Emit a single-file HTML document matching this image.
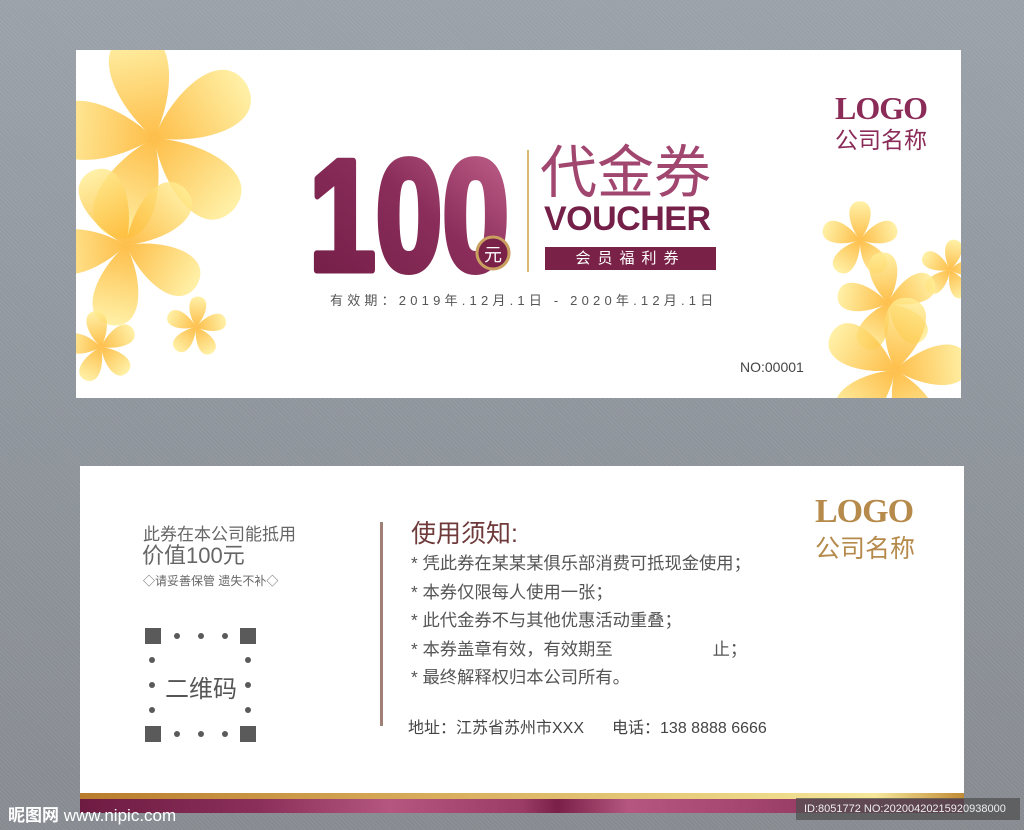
<!DOCTYPE html>
<html><head><meta charset="utf-8"><style>
*{margin:0;padding:0;box-sizing:border-box}
body{width:1024px;height:830px;position:relative;overflow:hidden;font-family:"Liberation Sans","Noto Sans CJK SC",sans-serif;
background:linear-gradient(180deg,#9aa1a9 0%,#8f959c 50%,#878b91 100%)}
.tex{position:absolute;inset:0;background:repeating-linear-gradient(45deg,rgba(255,255,255,.06) 0 1px,transparent 1px 3px)}
.card{position:absolute;background:#fff}
.abs{position:absolute;white-space:nowrap}
</style></head><body>
<div class="tex"></div>
<svg width="0" height="0" style="position:absolute">
<defs>
<linearGradient id="pg2" x1="0" y1="1" x2="0" y2="0">
<stop offset="0" stop-color="#fdb022"/><stop offset="1" stop-color="#ffee95"/></linearGradient>
<path id="pt" d="M0,0 C-30,-38 -44,-100 0,-102 C44,-100 30,-38 0,0Z" fill="url(#pg2)" opacity=".82"/>
<g id="fl"><use href="#pt"/><use href="#pt" transform="rotate(72)"/><use href="#pt" transform="rotate(144)"/><use href="#pt" transform="rotate(216)"/><use href="#pt" transform="rotate(288)"/></g>
<linearGradient id="num" x1="0" y1="1" x2="1" y2="0"><stop offset="0" stop-color="#701c45"/><stop offset=".55" stop-color="#8a2d5a"/><stop offset=".85" stop-color="#b4557f"/><stop offset="1" stop-color="#8a2d5a"/></linearGradient>
</defs></svg>

<div class="card" style="left:76px;top:50px;width:885px;height:348px;overflow:hidden">
<svg width="885" height="348" style="position:absolute;left:0;top:0">
<use href="#fl" transform="translate(78,88) rotate(-12) scale(1.05)"/>
<use href="#fl" transform="translate(50,195) rotate(-25) scale(.8)"/>
<use href="#fl" transform="translate(120,277) rotate(5) scale(.3)"/>
<use href="#fl" transform="translate(25,297) rotate(-10) scale(.36)"/>
<use href="#fl" transform="translate(784,190) rotate(0) scale(.38)"/>
<use href="#fl" transform="translate(874,220) rotate(10) scale(.3)"/>
<use href="#fl" transform="translate(812,253) rotate(-8) scale(.5)"/>
<use href="#fl" transform="translate(819,320) rotate(12) scale(.72)"/>
<text x="233" y="220" font-family="Liberation Sans" font-weight="bold" font-size="158" fill="url(#num)" stroke="url(#num)" stroke-width="7" stroke-linejoin="round" textLength="200" lengthAdjust="spacingAndGlyphs">100</text>
<circle cx="417" cy="203" r="16" fill="#7a2148" stroke="#c9a060" stroke-width="3"/>
<text x="417" y="211" text-anchor="middle" font-family="Noto Sans CJK SC" font-size="18" fill="#fff">元</text>
<line x1="452" y1="100" x2="452" y2="222" stroke="#d9b870" stroke-width="2"/>
</svg>
<div class="abs" style="left:464px;top:93px;font-size:57px;line-height:60px;color:#a0466f">代金券</div>
<div class="abs" style="left:468px;top:150px;font-size:34px;font-weight:bold;color:#752048;letter-spacing:-0.5px">VOUCHER</div>
<div class="abs" style="left:469px;top:197px;width:171px;height:23px;background:#7a2148;color:#fff;font-size:15px;line-height:23px;text-align:center;letter-spacing:7px">会员福利券</div>
<div class="abs" style="left:254px;top:240px;font-size:13px;color:#555;letter-spacing:4.2px">有效期：2019年.12月.1日 - 2020年.12月.1日</div>
<div class="abs" style="left:759px;top:40px;font-family:'Liberation Serif',serif;font-weight:bold;font-size:32px;color:#8a2b58;letter-spacing:-1px">LOGO</div>
<div class="abs" style="left:759px;top:71px;font-size:23px;color:#8a2b58">公司名称</div>
<div class="abs" style="left:664px;top:309px;font-size:14px;color:#444">NO:00001</div>
</div>

<div class="card" style="left:80px;top:466px;width:884px;height:347px">
<div class="abs" style="left:63px;top:54px;font-size:17px;color:#666">此券在本公司能抵用</div>
<div class="abs" style="left:62px;top:72px;font-size:22px;color:#666">价值100元</div>
<div class="abs" style="left:63px;top:106px;font-size:12px;color:#666">◇请妥善保管 遗失不补◇</div>
<svg width="120" height="120" style="position:absolute;left:62px;top:158px">
<g fill="#5a5a5a"><rect x="3" y="4" width="16" height="16"/><rect x="98" y="4" width="16" height="16"/><rect x="3" y="102" width="16" height="16"/><rect x="98" y="102" width="16" height="16"/>
<circle cx="35" cy="12" r="3"/><circle cx="59" cy="12" r="3"/><circle cx="83" cy="12" r="3"/>
<circle cx="35" cy="110" r="3"/><circle cx="59" cy="110" r="3"/><circle cx="83" cy="110" r="3"/>
<circle cx="10" cy="36" r="3"/><circle cx="10" cy="61" r="3"/><circle cx="10" cy="86" r="3"/>
<circle cx="106" cy="36" r="3"/><circle cx="106" cy="61" r="3"/><circle cx="106" cy="86" r="3"/></g></svg>
<div class="abs" style="left:85px;top:203px;font-size:24px;color:#555">二维码</div>
<div class="abs" style="left:300px;top:56px;width:3px;height:204px;background:#9e8076"></div>
<div class="abs" style="left:331px;top:48px;font-size:25px;color:#6e3a3a">使用须知:</div>
<div class="abs" style="left:331px;top:83px;font-size:17.3px;line-height:28.5px;color:#555">
*&nbsp;凭此券在某某某俱乐部消费可抵现金使用；<br>*&nbsp;本券仅限每人使用一张；<br>*&nbsp;此代金券不与其他优惠活动重叠；<br>*&nbsp;本券盖章有效，有效期至<span style="display:inline-block;width:100px"></span>止；<br>*&nbsp;最终解释权归本公司所有。</div>
<div class="abs" style="left:328px;top:248px;font-size:16px;color:#444">地址：江苏省苏州市XXX<span style="display:inline-block;width:28px"></span>电话：138 8888 6666</div>
<div class="abs" style="left:735px;top:27px;font-family:'Liberation Serif',serif;font-weight:bold;font-size:34px;color:#b58a4b;letter-spacing:-1px">LOGO</div>
<div class="abs" style="left:735px;top:63px;font-size:25px;color:#b58a4b">公司名称</div>
<div class="abs" style="left:0;top:327px;width:884px;height:6px;background:linear-gradient(90deg,#b87c2c,#d8ad5c 40%,#e8cf7e 70%,#f6e79a 90%,#c08a36)"></div>
<div class="abs" style="left:0;top:333px;width:884px;height:14px;background:linear-gradient(90deg,#6e1b42,#8a2f59 20%,#b4567f 35%,#9a3c66 50%,#7a2048 54%,#b4567f 62%,#a44670 75%,#7a2148 100%)"></div>
</div>
<div class="abs" style="left:8px;top:801px;font-size:17px;color:#fff;font-weight:bold">昵图网 <span style="font-weight:normal">www.nipic.com</span></div>
<div class="abs" style="left:796px;top:798px;width:224px;height:22px;background:rgba(80,80,80,.75);color:#eee;font-size:11px;line-height:22px;padding-left:8px">ID:8051772 NO:20200420215920938000</div>
</body></html>
